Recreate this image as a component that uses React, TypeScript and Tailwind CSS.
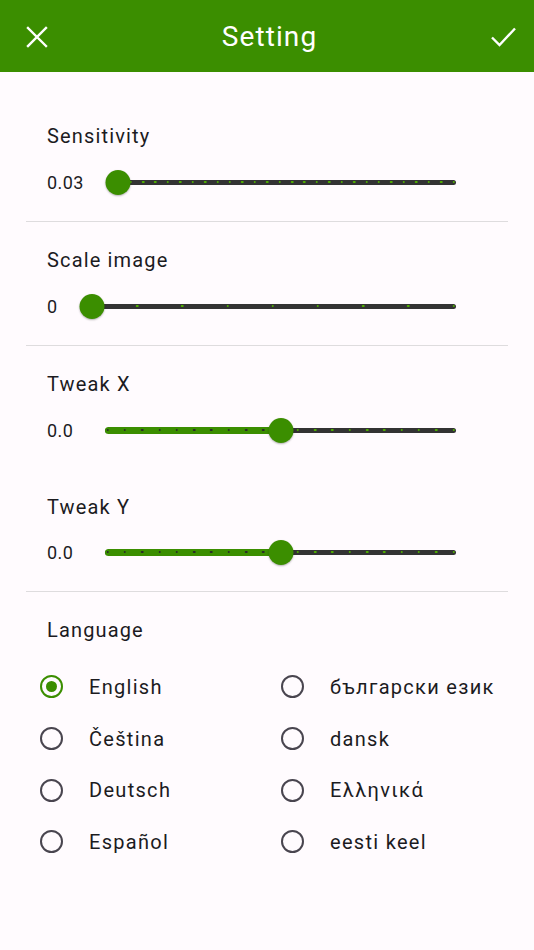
import React from "react";

const GREEN = "#3b8e00";

function Slider({ label, divisions, value }: { label: string; divisions: number; value: number }) {
  const f = value / divisions;
  const ticks = Array.from({ length: divisions + 1 }, (_, i) => i);
  return (
    <div className="flex items-center h-[48px] pl-[47px]">
      <span className="text-[18px] tracking-[0.4px] text-[#1c1b1f]">{label}</span>
      <div className="relative flex-1 ml-[32px] mr-[78px] h-full flex items-center">
        <div className="w-full h-[5px] rounded-full bg-[#333333]" />
        <div
          className="absolute left-0 h-[7px] rounded-full"
          style={{ width: `calc(2px + ${f} * (100% - 4px))`, backgroundColor: GREEN }}
        />
        {ticks.map((i) => (
          <div
            key={i}
            className="absolute w-[2.5px] h-[2.5px] rounded-full -translate-x-1/2"
            style={{
              left: `calc(2.5px + ${i / divisions} * (100% - 5px))`,
              backgroundColor: i < value ? "#2a2a2a" : "#4fb000",
            }}
          />
        ))}
        <div
          className="absolute w-[25px] h-[25px] rounded-full -translate-x-1/2 shadow-[0_1px_2px_rgba(0,0,0,0.3)]"
          style={{ left: `calc(2px + ${f} * (100% - 4px))`, backgroundColor: GREEN }}
        />
      </div>
    </div>
  );
}

function Title({ children }: { children: React.ReactNode }) {
  return (
    <div className="pl-[47px] h-[28px] leading-[28px] text-[20px] tracking-[1.15px] text-[#1c1b1f]">
      {children}
    </div>
  );
}

function Divider() {
  return <div className="mx-[26px] h-px bg-[#dedcde]" />;
}

function Radio({ label, checked }: { label: string; checked?: boolean }) {
  return (
    <div className="flex items-center h-[51.7px]">
      <div className="w-[104px] pl-[40px] flex items-center">
        {checked ? (
          <div
            className="w-[23px] h-[23px] rounded-full border-[2.3px] flex items-center justify-center"
            style={{ borderColor: GREEN }}
          >
            <div className="w-[11px] h-[11px] rounded-full" style={{ backgroundColor: GREEN }} />
          </div>
        ) : (
          <div className="w-[23px] h-[23px] rounded-full border-[2.3px] border-[#49454f]" />
        )}
      </div>
      <span className="-ml-[15px] text-[20px] tracking-[1.3px] text-[#1c1b1f]">{label}</span>
    </div>
  );
}

export default function App() {
  return (
    <div className="w-[534px] h-[950px] bg-[#fffbfe] font-['Roboto',sans-serif]">
      <div
        className="h-[72px] flex items-center justify-between pl-[24px] pr-[17px] pt-[2px]"
        style={{ backgroundColor: GREEN }}
      >
        <svg width="26" height="26" viewBox="0 0 26 26">
          <path d="M4 4 L22 22 M22 4 L4 22" stroke="white" strokeWidth="2.4" strokeLinecap="square" fill="none" />
        </svg>
        <span className="text-white text-[28px] tracking-[1.1px]">Setting</span>
        <svg width="28" height="28" viewBox="0 0 28 28">
          <path d="M3 14.5 L10.5 22 L26 5.5" stroke="white" strokeWidth="2.4" fill="none" />
        </svg>
      </div>
      <div className="pt-[50px]">
        <Title>Sensitivity</Title>
        <div className="h-[8px]" />
        <Slider label="0.03" divisions={27} value={0} />
        <div className="h-[15px]" />
        <Divider />
        <div className="h-[24px]" />
        <Title>Scale image</Title>
        <div className="h-[8px]" />
        <Slider label="0" divisions={8} value={0} />
        <div className="h-[15px]" />
        <Divider />
        <div className="h-[24px]" />
        <Title>Tweak X</Title>
        <div className="h-[8px]" />
        <Slider label="0.0" divisions={20} value={10} />
        <div className="h-[39px]" />
        <Title>Tweak Y</Title>
        <div className="h-[7px]" />
        <Slider label="0.0" divisions={20} value={10} />
        <div className="h-[15px]" />
        <Divider />
        <div className="h-[24px]" />
        <Title>Language</Title>
        <div className="h-[17px]" />
        <div className="grid grid-cols-2">
          <div>
            <Radio label="English" checked />
            <Radio label="Čeština" />
            <Radio label="Deutsch" />
            <Radio label="Español" />
          </div>
          <div className="-ml-[26px]">
            <Radio label="български език" />
            <Radio label="dansk" />
            <Radio label="Ελληνικά" />
            <Radio label="eesti keel" />
          </div>
        </div>
      </div>
    </div>
  );
}
